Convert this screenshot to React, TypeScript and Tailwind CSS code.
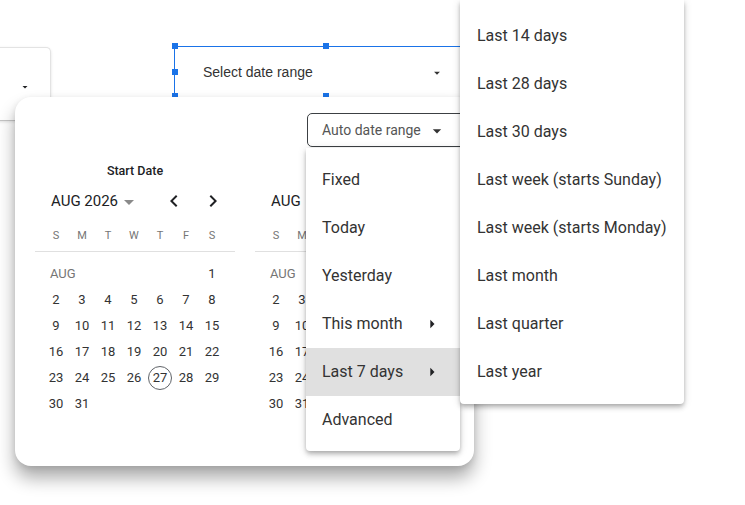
import React from "react";

const ArrowDrop = ({ size, color }: { size: number; color: string }) => (
  <svg width={size} height={size} viewBox="0 0 24 24" fill={color}>
    <path d="M7 10l5 5 5-5z" />
  </svg>
);

const ArrowRight = ({ size, color }: { size: number; color: string }) => (
  <svg width={size} height={size} viewBox="0 0 24 24" fill={color}>
    <path d="M10 17l5-5-5-5v10z" />
  </svg>
);

const ChevronLeft = () => (
  <svg width="24" height="24" viewBox="0 0 24 24" fill="#202124">
    <path d="M15.41 7.41L14 6l-6 6 6 6 1.41-1.41L10.83 12z" />
  </svg>
);

const ChevronRight = () => (
  <svg width="24" height="24" viewBox="0 0 24 24" fill="#202124">
    <path d="M10 6L8.59 7.41 13.17 12l-4.58 4.59L10 18l6-6z" />
  </svg>
);

const weekdays = ["S", "M", "T", "W", "T", "F", "S"];

// August 2026 starts on a Saturday
const weeks: (number | null)[][] = [
  [null, null, null, null, null, null, 1],
  [2, 3, 4, 5, 6, 7, 8],
  [9, 10, 11, 12, 13, 14, 15],
  [16, 17, 18, 19, 20, 21, 22],
  [23, 24, 25, 26, 27, 28, 29],
  [30, 31, null, null, null, null, null],
];

// `cols` limits how many weekday columns are drawn; the end calendar only
// shows its first two columns beside the open presets menu.
function MonthCalendar({ title, today, cols = 7 }: { title?: string; today?: number; cols?: number }) {
  const full = cols === 7;
  return (
    <div className="w-[200px] shrink-0">
      <div className="h-[16px] text-center text-[12.5px] leading-[16px] font-medium text-[#202124]">{title}</div>
      <div className="mt-[6px] h-[32px] flex items-center pl-[16px]">
        <span className="text-[15px] text-[#202124]">{full ? "AUG 2026" : "AUG"}</span>
        {full && (
          <>
            <span className="ml-[-1px] mt-[1px]">
              <ArrowDrop size={24} color="#8a8a8a" />
            </span>
            <div className="ml-auto flex gap-[15px] pr-[10px]">
              <ChevronLeft />
              <ChevronRight />
            </div>
          </>
        )}
      </div>
      <div className="mt-[9px] ml-[8px] grid grid-cols-[repeat(7,26px)] h-[20px] items-center">
        {weekdays.slice(0, cols).map((d, i) => (
          <div key={i} className="text-center text-[11px] text-[#757575]">
            {d}
          </div>
        ))}
      </div>
      <div className="mt-[5px] border-t border-[#e0e0e0]" />
      <div className="mt-[9px] ml-[8px] grid grid-cols-[repeat(7,26px)] auto-rows-[26px]">
        {weeks.map((w, wi) =>
          w.map((d, di) => {
            if (wi === 0 && di === 0) {
              return (
                <div key={`${wi}-${di}`} className="col-span-3 flex items-center pl-[7px] text-[13px] text-[#757575]">
                  AUG
                </div>
              );
            }
            if (wi === 0 && (di === 1 || di === 2)) return null;
            const shown = di < cols && d !== null;
            return (
              <div key={`${wi}-${di}`} className="flex items-center justify-center text-[13px] text-[#333]">
                {shown &&
                  (d === today ? (
                    <span className="w-[24px] h-[24px] rounded-full border border-[#5f6368] flex items-center justify-center">
                      {d}
                    </span>
                  ) : (
                    d
                  ))}
              </div>
            );
          })
        )}
      </div>
    </div>
  );
}

const mainOptions = [
  { label: "Fixed" },
  { label: "Today" },
  { label: "Yesterday" },
  { label: "This month", sub: true },
  { label: "Last 7 days", sub: true, active: true },
  { label: "Advanced" },
];

const subOptions = [
  "Last 14 days",
  "Last 28 days",
  "Last 30 days",
  "Last week (starts Sunday)",
  "Last week (starts Monday)",
  "Last month",
  "Last quarter",
  "Last year",
];

const Handle = ({ className }: { className: string }) => (
  <div className={`absolute w-[6px] h-[6px] bg-[#1a73e8] ${className}`} />
);

const menuShadow =
  "shadow-[0_2px_4px_-1px_rgba(0,0,0,0.2),0_4px_5px_0_rgba(0,0,0,0.14),0_1px_10px_0_rgba(0,0,0,0.12)]";

export default function App() {
  return (
    <div className="relative w-[745px] h-[505px] overflow-hidden bg-white font-['Roboto',sans-serif]">
      {/* neighbouring control on the canvas */}
      <div className="absolute left-[-10px] top-[47px] w-[61px] h-[74px] bg-white rounded-tr-[5px] border border-[#e3e3e3] border-b-[#c4c4c4] shadow-[0_1px_3px_rgba(0,0,0,0.12)]">
        <div className="absolute left-[28px] top-[33px]">
          <ArrowDrop size={12} color="#202124" />
        </div>
      </div>

      {/* selected date range control */}
      <div className="absolute left-[174px] top-[46px] w-[305px] h-[51px] border-t border-l border-[#1a73e8] flex items-center pl-[28px] pr-[35px] font-['Liberation_Sans',Arial,sans-serif]">
        <span className="text-[14px] text-[#333]">Select date range</span>
        <span className="ml-auto mt-[1px]">
          <ArrowDrop size={14} color="#333" />
        </span>
        <Handle className="left-[-3px] top-[-4px]" />
        <Handle className="left-[148px] top-[-4px]" />
        <Handle className="left-[-3px] top-[22px]" />
        <Handle className="left-[-3px] top-[46px]" />
        <Handle className="left-[148px] top-[46px]" />
      </div>

      {/* date picker panel */}
      <div className="absolute left-[15px] top-[97px] w-[459px] h-[369px] rounded-[16px] bg-white pt-[16px] px-[20px] shadow-[0_12px_18px_rgba(0,0,0,0.33),0_2px_6px_rgba(0,0,0,0.1)]">
        <div className="h-[34px] pl-[272px]">
          <div className="w-[160px] h-[34px] rounded-[5px] border border-[#3c4043] flex items-center pl-[14px]">
            <span className="text-[14px] text-[#555]">Auto date range</span>
            <span className="ml-[6px] mt-[1px]">
              <ArrowDrop size={20} color="#333" />
            </span>
          </div>
        </div>
        <div className="mt-[16px] flex gap-[20px]">
          <MonthCalendar title="Start Date" today={27} />
          <MonthCalendar cols={2} />
        </div>
      </div>

      {/* range presets menu */}
      <div className={`absolute left-[306px] top-[148px] w-[154px] bg-white rounded-b-[4px] pt-[8px] pb-[7px] ${menuShadow}`}>
        {mainOptions.map((o) => (
          <div
            key={o.label}
            className={`h-[48px] flex items-center pl-[16px] pr-[18px] text-[16px] text-[#333] ${o.active ? "bg-[#e0e0e0]" : ""}`}
          >
            <span>{o.label}</span>
            {o.sub && (
              <span className="ml-auto">
                <ArrowRight size={20} color="#202124" />
              </span>
            )}
          </div>
        ))}
      </div>

      {/* nested presets submenu */}
      <div className={`absolute left-[460px] top-0 w-[224px] bg-white rounded-b-[4px] pt-[12px] pb-[8px] ${menuShadow}`}>
        {subOptions.map((s) => (
          <div key={s} className="h-[48px] flex items-center pl-[17px] text-[16px] text-[#333]">
            {s}
          </div>
        ))}
      </div>
    </div>
  );
}
